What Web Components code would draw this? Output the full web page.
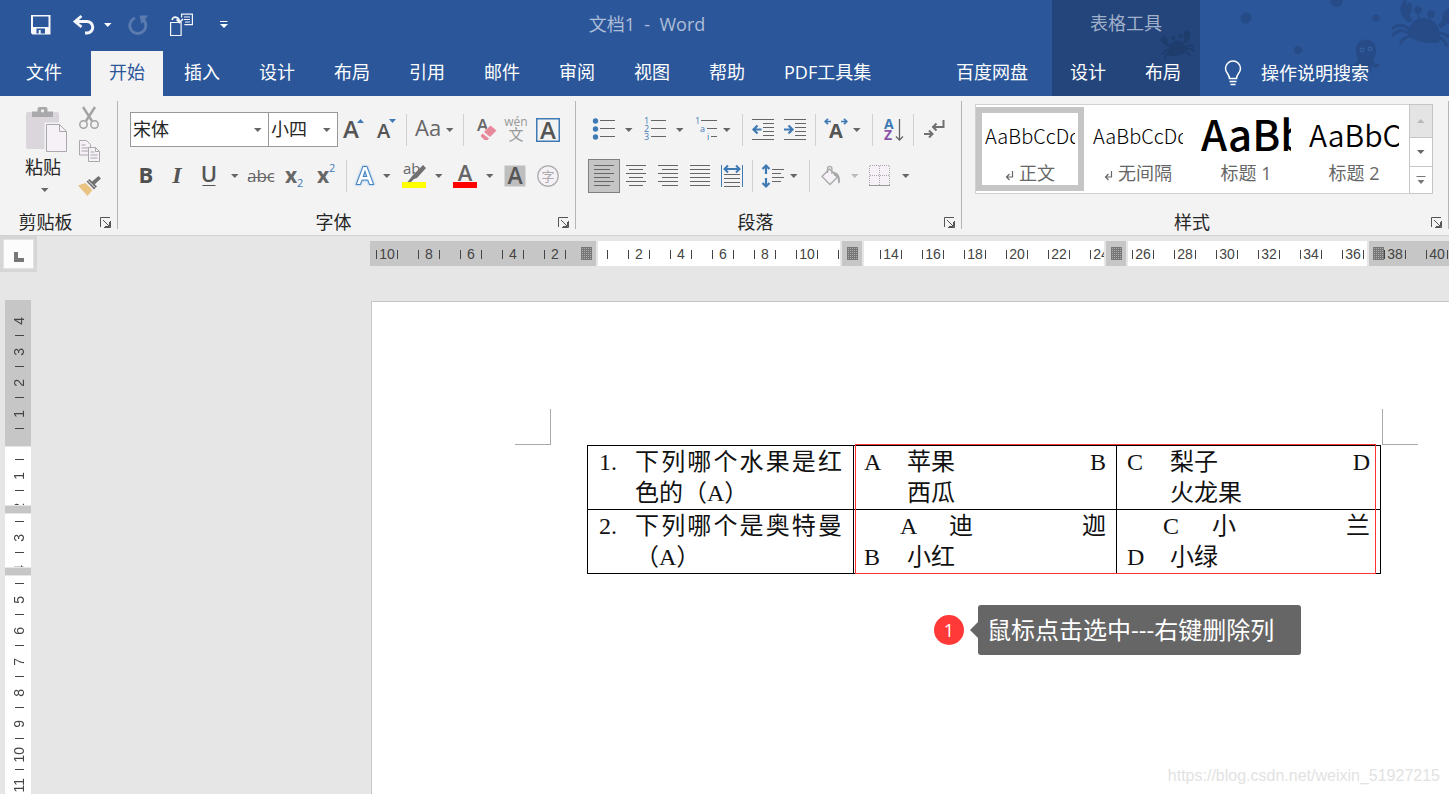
<!DOCTYPE html>
<html lang="zh-CN">
<head>
<meta charset="utf-8">
<title>文档1 - Word</title>
<style>
html, body { margin: 0; height: 100%; }
body { font: 18px/24px "Open Sans", "Noto Sans CJK SC", sans-serif; color: #262626; background: #e6e6e6; overflow: hidden; }
</style>
</head>
<body>
<word-app></word-app>
<script>
const BASE = `
*{box-sizing:border-box}
button,select{font:inherit;color:inherit;border:0;background:none;padding:0;margin:0}
`;
function define(name, css, html, setup) {
  const tpl = document.createElement('template');
  tpl.innerHTML = `<style>${BASE}${css}</style>${html}`;
  customElements.define(name, class extends HTMLElement {
    constructor() {
      super();
      this.attachShadow({ mode: 'open' }).append(tpl.content.cloneNode(true));
    }
    connectedCallback() { if (setup) setup(this, this.shadowRoot); }
  });
}

/* ---------- icons: [width, height, markup] ---------- */
const G = '#666', B = '#3f7ab5';
const lines = (list, c = G) => list.map(([x1, x2, y]) => `<path d="M${x1} ${y}H${x2}" stroke="${c}" stroke-width="1"/>`).join('');
const T = (x, y, size, fill, text, extra = '') => `<text x="${x}" y="${y}" font-family="Open Sans, sans-serif" font-size="${size}" fill="${fill}" ${extra}>${text}</text>`;
const para = (odd, even) => lines([0, 1, 2, 3, 4, 5].map(i => [...(i % 2 ? even : odd), i * 4 + .5]));
const ICONS = {
  save: [20, 20, `<path fill="#f4f6fa" fill-rule="evenodd" d="M0 0h19.5v19.5H1.500L0 18zM2 1.500v10.500h15.500V1.500zM5.500 13.500v5h2.200v-3.500h2v3.500H14v-5z"/>`],
  undo: [22, 20, `<g fill="none" stroke="#f4f6fa" stroke-width="3"><path d="M8.500 1L2 6.500 8.500 12" stroke-width="2.800"/><path d="M2.500 6.500H14a5.700 5.700 0 0 1 0 11.500H12"/></g>`],
  redo: [20, 20, `<path d="M7 3A8 8 0 1 0 14.500 4" fill="none" stroke="#5b7bb0" stroke-width="2.800"/><path d="M11.500 0.500H20L13.500 9z" fill="#5b7bb0"/>`],
  mode: [23, 23, `<g fill="none" stroke="#f4f6fa" stroke-width="1.200"><path d="M.6 9.500h10.500v13H.6z"/><path d="M11.600 4.500V1.100h10.800v10.500h-8"/><path d="M14 4h6M14 6.500h6M15 9h5"/><path d="M2 7c1-4 6-4 7.500 1M6.500 6.500L9.500 9.500 13 6" stroke-width="1.600"/></g>`],
  more: [8, 8, `<path d="M0 .5h7.500" stroke="#fff"/><path d="M0 3h8L4 7z" fill="#fff"/>`],
  caretw: [8, 4, `<path d="M0 0h7.500L3.750 4z" fill="#fff"/>`],
  caret: [8, 4, `<path d="M0 0h7.500L3.750 4z" fill="#666"/>`],
  caretoff: [8, 4, `<path d="M0 0h7.500L3.750 4z" fill="#bbb"/>`],
  caretup: [8, 4, `<path d="M0 4h7.500L3.750 0z" fill="#b8b8b8"/>`],
  caretmore: [10, 8, `<path d="M.5 .5h9" stroke="#777"/><path d="M1.500 4h7L5 8z" fill="#777"/>`],
  bulb: [18, 26, `<g fill="none" stroke="#fff" stroke-width="1.500"><path d="M5.500 18.500C5.500 14 1.500 13 1.500 8.500a7.500 7.500 0 0 1 15 0c0 4.500-4 5.500-4 10zM5.500 21.500h7"/><path d="M6.500 24.500h5"/></g>`],
  paste: [48, 46, `<rect x="7" y="5" width="33" height="37" rx="2" fill="#dbd6dc"/><path d="M13 10V4.500h5.500V2a2 2 0 0 1 2-2h6a2 2 0 0 1 2 2v2.500H34V10z" fill="#a9a9ab"/><circle cx="23.500" cy="3.800" r="1.600" fill="#f3f3f3"/><path d="M25.500 15.500v30h23v-23l-7-7z" fill="#f3f3f3"/><path d="M27.500 17.500h13l7 7v20h-20z" fill="#f6f1f7" stroke="#a9a9ab"/><path d="M40.500 17.500v7h7" fill="none" stroke="#a9a9ab"/>`],
  cut: [20, 22, `<g fill="none" stroke="#a3a3a5"><path d="M4 0l9 14M16 0L7 14" stroke-width="2.400"/><circle cx="4.500" cy="17.500" r="3.700" stroke-width="1.500"/><circle cx="15.500" cy="17.500" r="3.700" stroke-width="1.500"/></g>`],
  copy: [21, 22, `<g fill="#f6f1f7" stroke="#a9a9ab"><path d="M.5.5h7l4 4v10.500H.5z"/><path d="M2.500 5h4M2.500 8h7M2.500 11h7"/><path d="M9.500 7.500h7l4 4v10h-11z"/><path d="M16.500 7.500v4h4M11.500 12h4M11.500 15h7M11.500 18h7" fill="none"/></g>`],
  brush: [23, 20, `<path d="M0 9.500L7.500 7l7 7L9.500 20z" fill="#eac282"/><path d="M8.500 5.500l3-2.500 7.500 7.500-3 3z" fill="#707072"/><path d="M13 6.500L20.500 0 23 2.500 16 9z" fill="#707072"/><path d="M10 4.500l7 7" stroke="#f3f3f3"/>`],
  launch: [11, 11, `<path d="M.5 10V.5H10M10.500 4v6.500H4M3 3l6 6M9.500 5v4.500H5" fill="none" stroke="#555" stroke-width="1"/>`],
  grow: [24, 24, T(1, 20, 24, '#555', 'A', 'font-weight="600"') + `<path d="M15 5h7l-3.500-4z" fill="${B}"/>`],
  shrink: [24, 24, T(3, 20, 20, '#555', 'A', 'font-weight="600"') + `<path d="M15 1h7l-3.500 4z" fill="${B}"/>`],
  cases: [40, 24, T(0, 18, 22, G, 'Aa', 'font-weight="500"') + `<path d="M31 10h7.500l-3.750 4z" fill="#666"/>`],
  clear: [24, 24, T(3, 13, 17, G, 'A', 'font-weight="600"') + `<path d="M7.500 16.500L16 7l6.500 4.500L13 22H10z" fill="#f3f3f3"/><path d="M10 14l6.500-6.500 6 5L16 19z" fill="#e8899b"/><path d="M8.500 15.500L15 20.500 13.500 22h-3L6.500 18z" fill="#e8899b"/>`],
  wen: [24, 26, T(12, 9, 12, '#999', 'wén', 'text-anchor="middle"') + `<text x="12" y="23" text-anchor="middle" font-family="Noto Sans CJK SC, sans-serif" font-size="15" fill="#999">文</text>`],
  boxed: [24, 24, `<rect x=".75" y=".75" width="22.500" height="22.500" fill="none" stroke="${B}" stroke-width="1.500"/>` + T(12, 20.5, 24, '#555', 'A', 'font-weight="600" text-anchor="middle"')],
  bold: [20, 24, T(10, 19, 22, '#4f4f4f', 'B', 'font-weight="700" text-anchor="middle"')],
  italic: [20, 24, `<text x="10" y="19" font-family="Liberation Serif, serif" font-size="24" font-weight="700" font-style="italic" fill="#555" text-anchor="middle">I</text>`],
  underline: [20, 24, T(10, 18, 22, '#555', 'U', 'font-weight="600" text-anchor="middle"') + `<path d="M3.500 21.500h13" stroke="#555"/>`],
  strike: [26, 24, T(13, 18, 17, G, 'abc', 'text-anchor="middle"') + `<path d="M0 13.500h26" stroke="#666"/>`],
  sub: [22, 24, T(2, 18.5, 21, G, 'x', 'font-weight="700"') + T(14, 23, 11, B, '2')],
  sup: [22, 24, T(2, 18.5, 21, G, 'x', 'font-weight="700"') + T(14, 8, 11, B, '2')],
  effect: [24, 24, T(12, 19.5, 24, '#fff', 'A', 'font-weight="600" text-anchor="middle" stroke="#4683c1" stroke-width="2" paint-order="stroke" style="filter:drop-shadow(0 0 1px #79b0e6)"')],
  mark: [24, 26, T(1, 11, 15, G, 'ab', 'font-weight="500"') + `<path d="M11 12L21 2l3 3L15 15l-3 1-3 3H5.500z" fill="#707070"/><path d="M0 19h24v6H0z" fill="#ff0"/>`],
  color: [24, 26, T(12, 17.5, 22, G, 'A', 'font-weight="600" text-anchor="middle"') + `<path d="M0 19h24v6H0z" fill="red"/>`],
  shade: [22, 22, `<path d="M.5.5h21v21H.5z" fill="#bebebe"/>` + T(11, 19, 23, '#555', 'A', 'font-weight="600" text-anchor="middle"')],
  ring: [22, 22, `<circle cx="11" cy="11" r="10.200" fill="#f6f1f7" stroke="#aaa" stroke-width="1.200"/><text x="11" y="16" text-anchor="middle" font-family="Noto Sans CJK SC, sans-serif" font-size="13" fill="#aaa">字</text>`],
  bullets: [22, 22, [1.5, 9.5, 17.5].map(y => `<circle cx="2.500" cy="${y + .5}" r="2.700" fill="${B}"/>`).join('') + lines([[7, 22, 1.5], [7, 22, 9.5], [7, 22, 17.5]])],
  numbers: [22, 22, T(0, 5, 9, B, '1') + T(0, 13, 9, B, '2') + T(0, 21, 9, B, '3') + lines([[7, 22, 1.5], [7, 22, 9.5], [7, 22, 17.5]])],
  levels: [22, 22, T(0, 5, 9, B, '1') + T(5, 13, 9, B, 'a') + T(12, 21, 9, B, 'i') + lines([[6, 22, 1.5], [12, 22, 9.5], [16, 22, 17.5]])],
  outdent: [22, 22, lines([[0, 22, .5], [11, 22, 4.5], [11, 22, 8.5], [11, 22, 12.5], [11, 22, 16.5], [0, 22, 20.5]]) + `<path d="M9.500 10.500H2M5.500 6.500l-4 4 4 4" fill="none" stroke="${B}" stroke-width="2.200"/>`],
  indent: [22, 22, lines([[0, 22, .5], [11, 22, 4.5], [11, 22, 8.5], [11, 22, 12.5], [11, 22, 16.5], [0, 22, 20.5]]) + `<path d="M0 10.500h8M4.500 6.500l4 4-4 4" fill="none" stroke="${B}" stroke-width="2.200"/>`],
  cjk: [24, 22, T(12, 18.5, 20, '#555', 'A', 'font-weight="700" text-anchor="middle"') + `<path d="M7 2.500H1M4-.2L1.200 2.500 4 5.200M17 2.500h6M20-.2l2.800 2.700L20 5.200" fill="none" stroke="${B}" stroke-width="1.700"/>`],
  sort: [22, 24, T(1, 11, 14, B, 'A', 'font-weight="700"') + T(1, 22, 14, '#8a55a8', 'Z', 'font-weight="700"') + `<path d="M16.500 1v21M13 18.500l3.500 3.500 3.500-3.500" fill="none" stroke="#666" stroke-width="1.300"/>`],
  marks: [22, 22, `<path d="M20.500 1v7H10M13.500 4.500L10 8l3.500 3.500M1 15h8M6 11.500L9.500 15 6 18.500" fill="none" stroke="#707070" stroke-width="2"/>`],
  left: [20, 22, para([0, 20], [0, 16])],
  center: [20, 22, para([0, 20], [3, 17])],
  right: [20, 22, para([0, 20], [4, 20])],
  justify: [20, 22, para([0, 20], [0, 20])],
  spread: [22, 24, `<path d="M.5 1v22M21.500 1v22" stroke="${B}"/><path d="M4 5h14M7 1.500L3.500 5 7 8.500M15 1.500L18.500 5 15 8.500" fill="none" stroke="${B}" stroke-width="2"/>` + lines([[3, 19, 10.5], [3, 19, 14.5], [3, 19, 18.5], [3, 19, 22.5]])],
  spacing: [24, 24, `<path d="M5 2v8M1.500 5L5 1.500 8.500 5M5 14v8M1.500 19L5 22.500 8.500 19" fill="none" stroke="${B}" stroke-width="2.200"/>` + lines([[11, 23, 5.5], [11, 20, 9.5], [11, 23, 13.5], [11, 20, 17.5]])],
  bucket: [20, 22, `<path d="M1 11.500L8.500 4l8 8L9 19.500z" fill="#f6f1f7" stroke="#a9a9ab" stroke-width="1.300"/><path d="M6.500 8V3.500a2.200 2.200 0 0 1 4.400 0V9" fill="none" stroke="#a9a9ab" stroke-width="1.300"/><path d="M12 6.500c5 1 7.500 4 7 11l-2 1c.5-4-.5-6.500-4-8z" fill="#a9a9ab"/>`],
  borders: [22, 22, `<path d="M.5.500h20v20H.5z" fill="#f6f1f7"/><path d="M.5 20V.500h20V20M10.500 1v19M1 10.500h19" fill="none" stroke="#a9a9ab" stroke-dasharray="1 1"/><path d="M0 20.500h21" stroke="#999"/>`],
  enter: [9, 10, `<path d="M7.500 0v6H2M4.500 3L1.500 6l3 3" fill="none" stroke="#666" stroke-width="1.200"/>`],
  sea: [249, 96, `<defs><g id="crab">
    <path d="M17 36c0-13 10-20 19-17 9 2 14 10 12 23-8 2-21 0-31-6z"/>
    <path d="M17 22c-5-4-8-9-7-14 0-4 2-7 5-8v6l4-4c3 5 2 10-1 13l3 6zM47 25c3-2 5-4 5-7-1-4 2-8 7-9l-1 6 5-1c0 6-4 9-8 10l-5 4z"/>
    <circle cx="27" cy="10" r="3.500"/><circle cx="40" cy="14" r="3.500"/><path d="M26 12l3 8M39 17l-2 6" stroke-width="1.500"/>
    <path d="M18 29C12 24 6 24 1 29M17 33C11 29 6 30 1 36M18 37c-4 0-7 2-9 7M48 33c6 0 10 3 13 8M47 37c5 2 8 5 9 10" fill="none" stroke-width="3"/></g></defs>
    <g fill="#264a84" stroke="#264a84" stroke-width="0" opacity=".85"><use href="#crab" x="191" y="0" stroke-width="1"/>
    <circle cx="46" cy="18" r="5.500"/><circle cx="98" cy="50" r="4"/><circle cx="176" cy="18" r="3.500"/><path d="M130 0h13a6.500 7 0 0 1-13 0z"/>
    <path d="M156 50c0-14 20-14 20 0 0 6-2 8-3 10 1 4 4 5 7 4-2 5-7 5-9 1l1 8-4-6-2 7-3-7-4 6v-8c-2 4-7 4-9 0 4 0 6-1 8-5-1-2-2-5-2-10z"/></g>
    <g fill="none" stroke="#3a66a6"><circle cx="162" cy="50" r="2"/><circle cx="170" cy="49" r="2"/></g>`],
  crab: [36, 34, `<g fill="#1e3c6c" stroke="#1e3c6c" transform="translate(35 0) scale(-.54 .6)"><path d="M17 36c0-13 10-20 19-17 9 2 14 10 12 23-8 2-21 0-31-6z"/><path d="M17 22c-5-4-8-9-7-14 0-4 2-7 5-8v6l4-4c3 5 2 10-1 13l3 6zM47 25c3-2 5-4 5-7-1-4 2-8 7-9l-1 6 5-1c0 6-4 9-8 10l-5 4z"/><circle cx="27" cy="10" r="3"/><circle cx="40" cy="14" r="3"/><path d="M18 29C12 24 6 24 1 29M17 33C11 29 6 30 1 36M18 37c-4 0-7 2-9 7M48 33c6 0 10 3 13 8M47 37c5 2 8 5 9 10" fill="none" stroke-width="3"/></g>`],
};
customElements.define('ui-icon', class extends HTMLElement {
  static observedAttributes = ['name'];
  constructor() { super(); this.attachShadow({ mode: 'open' }); }
  attributeChangedCallback(attr, old, name) {
    const [w, h, body] = ICONS[name];
    this.shadowRoot.innerHTML = `<style>:host{display:block;flex:none}svg{display:block;overflow:visible}</style><svg width="${w}" height="${h}" viewBox="0 0 ${w} ${h}" aria-hidden="true">${body}</svg>`;
  }
});

define('tool-button', `
:host{display:flex;align-items:center;justify-content:center}
button{display:flex;align-items:center;justify-content:center;height:34px}
:host([on]) button{width:32px;background:#c5c5c5;border:1px solid #7f7f7f}
`, `<button type="button"><ui-icon></ui-icon></button>`, (el, root) => {
  root.querySelector('button').setAttribute('aria-label', el.getAttribute('label'));
  root.querySelector('ui-icon').setAttribute('name', el.getAttribute('icon'));
});

define('ribbon-tab', `
:host{display:block}
button{height:45px;padding:0 18px 3px;color:#fff;white-space:nowrap;display:block}
:host([active]) button{background:#f3f3f3;color:#2b579a}
`, `<button type="button"><slot></slot></button>`);

define('title-bar', `
:host{display:grid;grid-template-columns:minmax(0,1fr) 148px 249px;background:#2b579a;height:96px}
.main,.ctx,.tell{display:grid;grid-template-rows:51px 45px;min-width:0}
.top{display:flex;padding:0 6px 2px 16px;align-items:center}
.quick{display:grid;grid-template-columns:50px 36px 12px 48px 38px 48px}
.title{flex:1;text-align:center;color:#aebdd8;white-space:pre;padding-bottom:2px}
.tabs{display:flex;gap:3px;padding:0 6px 0 8px}
.main .tabs>:nth-child(2){margin-left:8px}
.tabs>.end{margin-left:auto}
.ctx{background:#23457b;position:relative}
.ctx .name{text-align:center;color:#a1b0ca;line-height:47px;position:relative}
.ctx .tabs{padding:0}
.ctx ui-icon{position:absolute;right:4px;top:30px}
.tell{position:relative;overflow:hidden}
.tell>ui-icon{position:absolute;right:0;top:0}
.tell button{grid-row:2;display:flex;align-items:center;gap:19px;color:#fff;padding:0 0 2px 24px;position:relative}
`, `
<div class="main">
  <div class="top">
    <div class="quick">
      <tool-button icon="save" label="保存"></tool-button><tool-button icon="undo" label="撤消"></tool-button><tool-button icon="caretw" label="撤消列表"></tool-button><tool-button icon="redo" label="重复"></tool-button><tool-button icon="mode" label="触摸/鼠标模式"></tool-button><tool-button icon="more" label="自定义快速访问工具栏"></tool-button>
    </div>
    <div class="title">文档1  -  Word</div>
  </div>
  <nav class="tabs">
    <ribbon-tab>文件</ribbon-tab><ribbon-tab active>开始</ribbon-tab><ribbon-tab>插入</ribbon-tab><ribbon-tab>设计</ribbon-tab><ribbon-tab>布局</ribbon-tab><ribbon-tab>引用</ribbon-tab><ribbon-tab>邮件</ribbon-tab><ribbon-tab>审阅</ribbon-tab><ribbon-tab>视图</ribbon-tab><ribbon-tab>帮助</ribbon-tab><ribbon-tab>PDF工具集</ribbon-tab><ribbon-tab class="end">百度网盘</ribbon-tab>
  </nav>
</div>
<div class="ctx"><ui-icon name="crab"></ui-icon><div class="name">表格工具</div><nav class="tabs"><ribbon-tab>设计</ribbon-tab><ribbon-tab>布局</ribbon-tab></nav></div>
<div class="tell"><ui-icon name="sea"></ui-icon><button type="button"><ui-icon name="bulb"></ui-icon>操作说明搜索</button></div>
`);

define('ribbon-group', `
:host{display:grid;grid-template-rows:113px 26px;background:linear-gradient(#b5b5b5,#b5b5b5) right 5px/1px 128px no-repeat}
footer{display:flex;align-items:center;line-height:26px}
.label{flex:1;text-align:center}
button{width:27px;padding-right:7px;display:flex;justify-content:flex-end}
.body{min-width:0}
`, `<div class="body"><slot></slot></div><footer><span class="label"></span><button type="button"><ui-icon name="launch"></ui-icon></button></footer>`, (el, root) => {
  const label = el.getAttribute('label');
  root.querySelector('.label').textContent = label;
  root.querySelector('button').setAttribute('aria-label', label + '设置');
});

define('combo-box', `
:host{display:grid;grid-template-columns:1fr;align-items:center;height:35px;background:#fff;border:1px solid #999}
select{grid-area:1/1;appearance:none;width:100%;height:33px;padding:0 0 2px 2px;outline:0}
ui-icon{grid-area:1/1;justify-self:end;margin-right:6px;pointer-events:none}
`, `<select></select><ui-icon name="caret"></ui-icon>`, (el, root) => {
  const s = root.querySelector('select');
  s.setAttribute('aria-label', el.getAttribute('label'));
  if (!s.length) s.add(new Option(el.getAttribute('value')));
});

define('style-card', `
:host{display:block;width:108px;height:84px}
button{width:108px;height:84px;padding:0 9px;display:grid;grid-template-rows:54px 24px;color:#666}
:host([selected]) button{border:6px solid #c5c5c5;padding:0 3px;grid-template-rows:48px 24px}
.sample{overflow:hidden;white-space:nowrap;text-align:left;color:#000;font-family:"Noto Sans CJK SC",sans-serif;font-size:var(--size,20px);font-weight:var(--weight,300);line-height:var(--line,58px);height:56px;width:90px}
:host([selected]) .sample{margin-top:-6px}
.name{display:flex;justify-content:center;align-items:center;gap:5px;line-height:24px;white-space:nowrap}
ui-icon{display:none;margin-top:5px}
:host([mark]) ui-icon{display:block}
`, `<button type="button"><span class="sample"></span><span class="name"><ui-icon name="enter"></ui-icon><slot></slot></span></button>`, (el, root) => {
  root.querySelector('.sample').textContent = el.getAttribute('sample');
});

define('ribbon-bar', `
:host{display:grid;grid-template-columns:118px 458px 386px minmax(486px,1fr);height:140px;background:#f3f3f3;border-bottom:1px solid #d2d2d2}
.clip{display:grid;grid-template-columns:49px 40px;padding:11px 0 0 19px}
.paste{display:flex;flex-direction:column;align-items:center;width:48px}
.paste span{line-height:28px}
.paste ui-icon:last-child{margin-top:7px;margin-left:4px}
.small{display:grid;grid-template-rows:21px 46px 24px;align-items:center;justify-items:center;padding-left:2px}
.rows{display:grid;grid-template-rows:35px 34px;row-gap:12px;padding:16px 0 0 12px}
.row{display:grid;align-items:center}
.row>*{min-width:0}
i{justify-self:center;width:1px;height:32px;background:#d0d0d0}
.f1{grid-template-columns:139px 69px 32px 32px 9px 48px 9px 36px 24px 40px}
.f1 combo-box+combo-box{margin-left:-1px}
.f2{grid-template-columns:32px 30px 34px 18px 34px 32px 32px 8px 30px 14px 40px 10px 42px 8px 42px 24px}
.p1{grid-template-columns:18px 32px 20px 30px 22px 20px 10px 32px 32px 8px 34px 8px 22px 22px 16px 26px;padding-left:7px}
.p2{grid-template-columns:repeat(5,32px) 8px 34px 8px 22px 22px 26px 24px 28px}
.gallery{display:grid;grid-template-columns:minmax(0,1fr) 24px;height:90px;margin:8px 16px 0 13px;background:#fff;border:1px solid #d2d2d2;border-right:0}
.cards{display:flex;padding-top:2px;overflow:hidden}
.scroll{display:grid;grid-template-rows:32px 29px 27px;margin:-1px 0;border:1px solid #c6c6c6}
.scroll tool-button+tool-button{border-top:1px solid #c6c6c6}
.scroll tool-button:first-child{background:#e4e4e4}
.scroll tool-button{overflow:hidden;min-height:0}
`, `
<ribbon-group label="剪贴板"><div class="clip">
  <button class="paste" type="button"><ui-icon name="paste"></ui-icon><span>粘贴</span><ui-icon name="caret"></ui-icon></button>
  <div class="small"><tool-button icon="cut" label="剪切"></tool-button><tool-button icon="copy" label="复制"></tool-button><tool-button icon="brush" label="格式刷"></tool-button></div>
</div></ribbon-group>
<ribbon-group label="字体"><div class="rows">
  <div class="row f1"><combo-box label="字体" value="宋体"></combo-box><combo-box label="字号" value="小四"></combo-box><tool-button icon="grow" label="增大字号"></tool-button><tool-button icon="shrink" label="减小字号"></tool-button><i></i><tool-button icon="cases" label="更改大小写"></tool-button><i></i><tool-button icon="clear" label="清除格式"></tool-button><tool-button icon="wen" label="拼音指南"></tool-button><tool-button icon="boxed" label="字符边框"></tool-button></div>
  <div class="row f2"><tool-button icon="bold" label="加粗"></tool-button><tool-button icon="italic" label="倾斜"></tool-button><tool-button icon="underline" label="下划线"></tool-button><tool-button icon="caret" label="下划线样式"></tool-button><tool-button icon="strike" label="删除线"></tool-button><tool-button icon="sub" label="下标"></tool-button><tool-button icon="sup" label="上标"></tool-button><i></i><tool-button icon="effect" label="文本效果"></tool-button><tool-button icon="caret" label="更多文本效果"></tool-button><tool-button icon="mark" label="突出显示"></tool-button><tool-button icon="caret" label="突出显示颜色"></tool-button><tool-button icon="color" label="字体颜色"></tool-button><tool-button icon="caret" label="更多字体颜色"></tool-button><tool-button icon="shade" label="字符底纹"></tool-button><tool-button icon="ring" label="带圈字符"></tool-button></div>
</div></ribbon-group>
<ribbon-group label="段落"><div class="rows">
  <div class="row p1"><tool-button icon="bullets" label="项目符号"></tool-button><tool-button icon="caret" label="项目符号库"></tool-button><tool-button icon="numbers" label="编号"></tool-button><tool-button icon="caret" label="编号库"></tool-button><tool-button icon="levels" label="多级列表"></tool-button><tool-button icon="caret" label="列表库"></tool-button><i></i><tool-button icon="outdent" label="减少缩进量"></tool-button><tool-button icon="indent" label="增加缩进量"></tool-button><i></i><tool-button icon="cjk" label="中文版式"></tool-button><tool-button icon="caret" label="更多中文版式"></tool-button><i></i><tool-button icon="sort" label="排序"></tool-button><i></i><tool-button icon="marks" label="显示编辑标记"></tool-button></div>
  <div class="row p2"><tool-button on icon="left" label="左对齐"></tool-button><tool-button icon="center" label="居中"></tool-button><tool-button icon="right" label="右对齐"></tool-button><tool-button icon="justify" label="两端对齐"></tool-button><tool-button icon="spread" label="分散对齐"></tool-button><i></i><tool-button icon="spacing" label="行距"></tool-button><tool-button icon="caret" label="行距选项"></tool-button><i></i><tool-button icon="bucket" label="底纹"></tool-button><tool-button icon="caretoff" label="底纹颜色"></tool-button><tool-button icon="borders" label="边框"></tool-button><tool-button icon="caret" label="边框样式"></tool-button></div>
</div></ribbon-group>
<ribbon-group label="样式"><div class="gallery">
  <div class="cards"><style-card selected mark sample="AaBbCcDd">正文</style-card><style-card mark sample="AaBbCcDd">无间隔</style-card><style-card sample="AaBb" style="--size:42px;--weight:500;--line:52px">标题 1</style-card><style-card sample="AaBbC" style="--size:30px;--weight:350;--line:54px">标题 2</style-card></div>
  <div class="scroll"><tool-button icon="caretup" label="上一行"></tool-button><tool-button icon="caret" label="下一行"></tool-button><tool-button icon="caretmore" label="其他样式"></tool-button></div>
</div></ribbon-group>
`);

define('h-ruler', `
:host{display:flex;position:relative;height:25px;overflow:hidden;font:14px/25px "Liberation Sans",sans-serif;color:#444;
 background:linear-gradient(90deg,#c6c6c6 226px,#e6e6e6 226px 228px,#fff 228px 997px,#e6e6e6 997px 999px,#c6c6c6 999px)}
.cells{display:flex;margin-left:-4px;padding-top:2px}
.cell{flex:none;width:42px;display:flex;justify-content:center;align-items:center}
.cell span{width:22px;height:9px;line-height:9px;border:solid #444;border-width:0 1px;display:flex;justify-content:center}
b{position:absolute;top:0;width:24px;height:25px;border:solid #e6e6e6;border-width:0 2px;background:#c6c6c6}
b.open{border:0;background:none}
b::after{content:"";position:absolute;left:5px;top:6px;width:11px;height:13px;background:repeating-linear-gradient(90deg,#777 0 1px,transparent 1px 2px),repeating-linear-gradient(#777 0 1px,#aaa 1px 2px)}
b.open::after{left:0}
`, `<div class="cells"></div><b class="open" style="left:211px"></b><b style="left:470px"></b><b style="left:734px"></b><b class="open" style="left:1003px"></b>`, (el, root) => {
  const cells = root.querySelector('.cells');
  const draw = () => {
    let html = '';
    for (let n = -10; 576 + 21 * n < innerWidth; n += 2) html += `<div class="cell"><span>${n ? Math.abs(n) : ''}</span></div>`;
    cells.innerHTML = html;
  };
  draw();
  addEventListener('resize', draw);
});

define('v-ruler', `
:host{display:block;position:relative;width:26px;overflow:hidden;padding-top:5px;font:14px/26px "Liberation Sans",sans-serif;color:#444;background:linear-gradient(#c6c6c6 146px,#e6e6e6 146px 147px,#fff 147px)}
.cell{height:31px;padding-left:2px;display:flex;justify-content:center;align-items:center;background:linear-gradient(#444,#444) 10px 100%/9px 1px no-repeat}
.cell span{writing-mode:vertical-rl;transform:rotate(180deg);line-height:24px}
b{position:absolute;left:0;width:26px;height:9px;background:#c6c6c6;border:solid #e6e6e6;border-width:1px 0}
`, `<div class="cells"></div><b style="top:205px"></b><b style="top:267px"></b>`, (el, root) => {
  const cells = root.querySelector('.cells');
  const draw = () => {
    let html = '';
    for (let n = -4; 430 + 31 * n < innerHeight; n++) html += `<div class="cell"><span>${n ? Math.abs(n) : ''}</span></div>`;
    cells.innerHTML = html;
  };
  draw();
  addEventListener('resize', draw);
});

define('answer-line', `
:host{display:grid;grid-template-columns:43px 1fr auto;height:31px;line-height:31px;padding-left:var(--indent,0)}
`, `<span><slot name="key"></slot></span><span><slot></slot></span><span><slot name="end"></slot></span>`);

define('quiz-table', `
:host{display:block;position:relative;width:794px;margin-left:72px;font:24px/31px "Liberation Serif","Noto Sans CJK SC",serif;color:#111}
table{border-collapse:collapse;table-layout:fixed;width:794px}
td{border:1px solid #000;padding:0;height:64px;vertical-align:top}
tr:first-child td{height:63px}
td.q{padding:1px 11px 0}
td.a{padding:1px 10px 0}
.item{display:grid;grid-template-columns:36px 1fr}
.item p{margin:0}
.wide{display:block;text-align:justify;text-align-last:justify}
.sel{position:absolute;left:268px;top:-1px;width:521px;height:130px;border:1px solid #f33;pointer-events:none}
.in{--indent:36px}
`, `
<table><colgroup><col style="width:266px"><col style="width:263px"><col></colgroup><tbody>
<tr><td class="q"><div class="item"><span>1.</span><p><span class="wide">下列哪个水果是红</span>色的（A）</p></div></td>
<td class="a"><answer-line><span slot="key">A</span>苹果<span slot="end">B</span></answer-line><answer-line>西瓜</answer-line></td>
<td class="a"><answer-line><span slot="key">C</span>梨子<span slot="end">D</span></answer-line><answer-line>火龙果</answer-line></td></tr>
<tr><td class="q"><div class="item"><span>2.</span><p><span class="wide">下列哪个是奥特曼</span>（A）</p></div></td>
<td class="a"><answer-line class="in"><span slot="key">A</span>&nbsp;迪<span slot="end">迦</span></answer-line><answer-line><span slot="key">B</span>小红</answer-line></td>
<td class="a"><answer-line class="in"><span slot="key">C</span>&nbsp;小<span slot="end">兰</span></answer-line><answer-line><span slot="key">D</span>小绿</answer-line></td></tr>
</tbody></table><div class="sel"></div>`);

define('callout-tip', `
:host{display:flex;align-items:center;gap:14px;color:#fff}
.num{width:30px;height:30px;border-radius:50%;background:#ff3838;font-size:18px;line-height:30px;text-align:center}
.box{position:relative;height:50px;width:323px;padding-left:9px;border-radius:3px;background:#666;font-size:24px;line-height:50px;white-space:nowrap}
.box::before{content:"";position:absolute;left:-8px;top:17px;border:solid transparent;border-width:8px 8px 8px 0;border-right-color:#666}
`, `<span class="num"><slot name="num"></slot></span><span class="box"><slot></slot></span>`);

define('doc-page', `
:host{display:block;position:relative;background:#fff;border:solid #c6c6c6;border-width:1px 0 0 1px;padding:107px 0 0 143px;overflow:hidden}
.corners{display:flex;justify-content:space-between;width:903px;height:36px}
.corners i{width:36px;border:solid #aaa;border-width:0 1px 1px 0}
.corners i+i{border-width:0 0 1px 1px}
callout-tip{position:absolute;left:562px;top:303px}
`, `<div class="corners"><i></i><i></i></div><quiz-table></quiz-table><callout-tip><span slot="num">1</span>鼠标点击选中---右键删除列</callout-tip>`);

define('word-app', `
:host{display:flex;flex-direction:column;height:100vh;min-width:1200px;overflow:hidden}
.work{flex:1;min-height:0;display:grid;grid-template-columns:370px minmax(0,1fr);position:relative}
.side{display:flex;flex-direction:column;min-height:0}
.tabstop{width:37px;height:36px;padding:0;background:#d6d6d6;flex:none;display:flex;align-items:center;justify-content:center}
.tabstop span{width:31px;height:30px;background:#fcfcfc;border:1px solid #e3e3e3;display:flex;align-items:center;justify-content:center}
.tabstop span::after{content:"";box-sizing:border-box;width:10px;height:10px;margin-top:6px;border:solid #777;border-width:0 0 4px 4px}
v-ruler{flex:1;min-height:0;margin:28px 0 0 5px}
.view{display:flex;flex-direction:column;min-height:0}
h-ruler{margin-top:5px;flex:none}
doc-page{flex:1;margin:35px 0 0 1px}
.mark{position:absolute;right:9px;bottom:6px;font:16px/24px "Liberation Sans",sans-serif;color:#e2e2e2}
`, `<title-bar></title-bar><ribbon-bar></ribbon-bar>
<div class="work"><div class="side"><button class="tabstop" type="button" aria-label="制表符"><span></span></button><v-ruler></v-ruler></div>
<div class="view"><h-ruler></h-ruler><doc-page></doc-page></div><div class="mark">https://blog.csdn.net/weixin_51927215</div></div>`);
</script>
</body>
</html>
